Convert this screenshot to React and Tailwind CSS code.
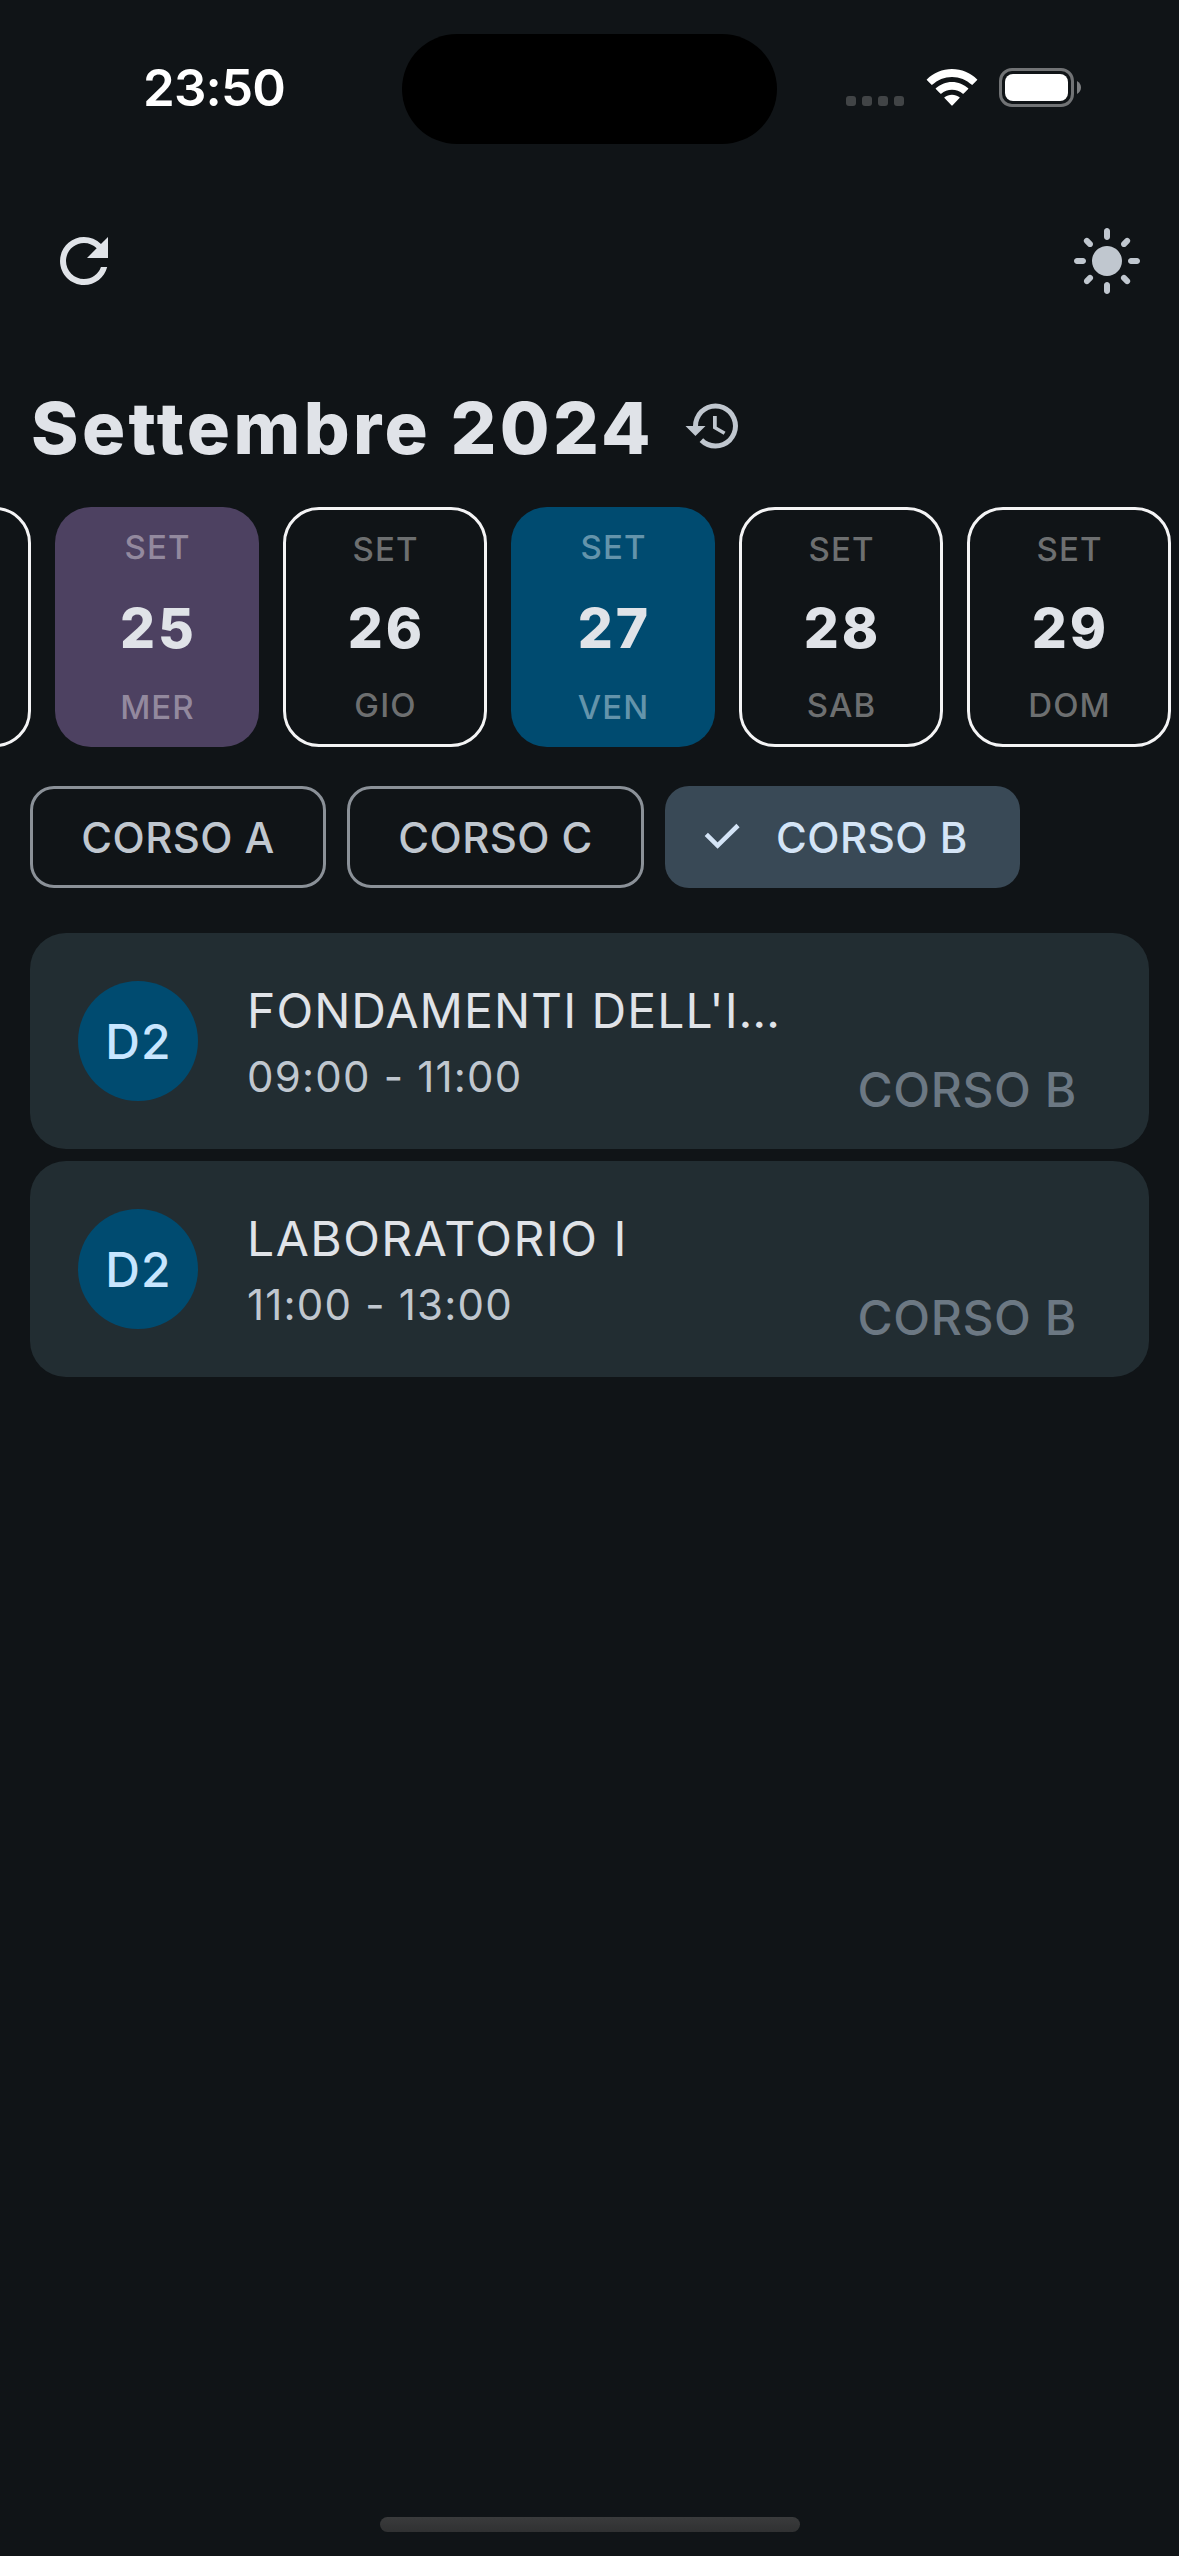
import { MdRefresh, MdLightMode, MdHistory } from "react-icons/md";

const days = [
  { day: "25", name: "MER", kind: "today" },
  { day: "26", name: "GIO", kind: "plain" },
  { day: "27", name: "VEN", kind: "selected" },
  { day: "28", name: "SAB", kind: "plain" },
  { day: "29", name: "DOM", kind: "plain" },
];

const dayStyles = {
  plain: "border-[3px] border-[#f4f4f5] py-[19px] text-[#6d6f70]",
  today: "bg-[#4d4161] py-[20px] text-[#93899e]",
  selected: "bg-[#004b70] py-[20px] text-[#6494ab]",
};

const lessons = [
  { room: "D2", title: "FONDAMENTI DELL'I…", time: "09:00 - 11:00", course: "CORSO B", spacing: "tracking-[1.05px]" },
  { room: "D2", title: "LABORATORIO I", time: "11:00 - 13:00", course: "CORSO B", spacing: "tracking-[1.5px]" },
];

function StatusBar() {
  return (
    <header className="grid h-[178px] grid-cols-[402px_375px_402px] pt-[34px]">
      <div className="flex h-[110px] items-center pl-[143px] pb-[3px]">
        <span className="text-[51px] leading-none font-semibold tracking-[-0.8px] text-white">23:50</span>
      </div>
      <div className="h-[110px] rounded-full bg-black" />
      <div className="flex h-[110px] pl-[69px]">
        <div className="flex gap-[6px] pt-[62px]">
          {[0, 1, 2, 3].map((i) => (
            <span key={i} className="size-[10px] rounded-[3px] bg-[#414446]" />
          ))}
        </div>
        <svg className="mt-[35px] ml-[22px] h-[38px] w-[52px]" viewBox="0 0 52 38" fill="#fff">
          <path d="M.8 10.400C7.600 3.900 16.400 0 26 0s18.400 3.900 25.200 10.400c.2.200.2.500 0 .7l-4.700 4.700c-.2.200-.5.200-.7 0C40.500 10.900 33.500 7.900 26 7.900S11.500 10.900 6.200 15.800c-.2.200-.5.200-.7 0L.8 11.100c-.2-.2-.2-.5 0-.7z" />
          <path d="M9.800 19.300C14 15.400 19.800 12.900 26 12.900s12 2.500 16.200 6.400c.2.200.2.500 0 .7l-4.700 4.700c-.2.200-.5.200-.7 0-2.900-2.500-6.700-4-10.800-4s-7.900 1.500-10.800 4c-.2.200-.5.200-.7 0L9.800 20c-.2-.2-.2-.5 0-.7z" />
          <path d="M18.500 28.300c2.100-1.600 4.700-2.600 7.500-2.600s5.400 1 7.500 2.600c.3.200.3.600 0 .8l-7.100 7.500c-.2.200-.6.200-.8 0l-7.100-7.500c-.3-.2-.3-.6 0-.8z" />
        </svg>
        <div className="mt-[34px] ml-[21px] flex h-[39px] items-center gap-[3px]">
          <div className="h-[39px] w-[75px] rounded-[13px] border-[3px] border-[#717375] p-[3px]">
            <div className="h-full w-full rounded-[8px] bg-white" />
          </div>
          <svg className="h-[13px] w-[4px]" viewBox="0 0 4 13" fill="#7d7f81">
            <path d="M0 0C2.500 1.200 4 3.700 4 6.500S2.500 11.800 0 13z" />
          </svg>
        </div>
      </div>
    </header>
  );
}

function DayCard({ day, name, kind }) {
  return (
    <div className={`flex h-[240px] w-[204px] shrink-0 flex-col items-center justify-between rounded-[36px] ${dayStyles[kind]}`}>
      <span className="-mr-px text-[33px] leading-[40px] font-medium tracking-[1.1px]">SET</span>
      <span className="mt-[2px] -mr-[3px] text-[55px] leading-[64px] font-extrabold tracking-[3px] text-[#e0e3e8]">{day}</span>
      <span className="-mr-px text-[33px] leading-[40px] font-medium tracking-[1.1px]">{name}</span>
    </div>
  );
}

function Chip({ label, className }) {
  return (
    <button className={`flex h-[102px] items-center justify-center rounded-[24px] border-[3px] border-[#8b9198] text-[42px] font-medium tracking-[0.4px] text-[#c0c7cf] ${className}`}>
      {label}
    </button>
  );
}

function LessonCard({ room, title, time, course, spacing }) {
  return (
    <article className="flex h-[216px] items-center rounded-[36px] bg-[#222d32] pl-[48px] pr-[72px]">
      <div className="flex size-[120px] shrink-0 items-center justify-center rounded-full bg-[#004b70] pt-px pl-px text-[48px] font-medium tracking-[1.2px] text-[#c8e6ff]">
        {room}
      </div>
      <div className="ml-[49px] flex flex-col">
        <span className={`text-[48px] leading-[72px] whitespace-nowrap text-[#e0e3e8] ${spacing}`}>{title}</span>
        <span className="text-[42px] leading-[60px] tracking-[1.2px] whitespace-nowrap text-[#c0c7cf]">{time}</span>
      </div>
      <span className="mt-[98px] ml-auto text-[48px] leading-[72px] font-medium tracking-[0.6px] whitespace-nowrap text-[#6c7883]">{course}</span>
    </article>
  );
}

export default function App() {
  return (
    <div className="flex h-[2556px] w-[1179px] flex-col overflow-hidden bg-[#101417] font-['Inter',sans-serif]">
      <StatusBar />
      <nav className="flex h-[166px] items-center justify-between pl-[48px] pr-[36px] text-[72px]">
        <MdRefresh className="text-[#e0e3e8]" />
        <MdLightMode className="text-[#c0c7cf]" />
      </nav>
      <div className="flex h-[163px] items-center pt-[4px] pl-[31px]">
        <h1 className="w-[620px] text-[72px] leading-[96px] font-extrabold tracking-[3.4px] whitespace-nowrap text-[#e0e3e8]">Settembre 2024</h1>
        <MdHistory className="ml-[32px] -mt-[4px] text-[60px] text-[#c0c7cf]" />
      </div>
      <div className="-ml-[173px] flex gap-[24px]">
        <div className="h-[240px] w-[204px] shrink-0 rounded-[36px] border-[3px] border-[#f4f4f5]" />
        {days.map((d) => (
          <DayCard key={d.day} {...d} />
        ))}
      </div>
      <div className="mt-[39px] flex gap-[21px] pl-[30px]">
        <Chip label="CORSO A" className="w-[296px]" />
        <Chip label="CORSO C" className="w-[297px]" />
        <button className="flex h-[102px] w-[355px] items-center rounded-[24px] bg-[#394956] pl-[33px] text-[42px] font-medium tracking-[0.5px] text-[#d4e4f6]">
          <svg className="size-[48px]" viewBox="0 0 48 48" fill="none" stroke="currentColor" strokeWidth="4.6">
            <path d="M8.300 21.300L19.600 32.600L40 12.500" />
          </svg>
          <span className="ml-[30px]">CORSO B</span>
        </button>
      </div>
      <main className="mt-[45px] flex flex-col gap-[12px] px-[30px]">
        {lessons.map((l) => (
          <LessonCard key={l.title} {...l} />
        ))}
      </main>
      <footer className="mt-auto flex justify-center pb-[24px]">
        <div className="h-[15px] w-[420px] rounded-full bg-linear-to-b from-[#3a3b3c] to-[#303132]" />
      </footer>
    </div>
  );
}
